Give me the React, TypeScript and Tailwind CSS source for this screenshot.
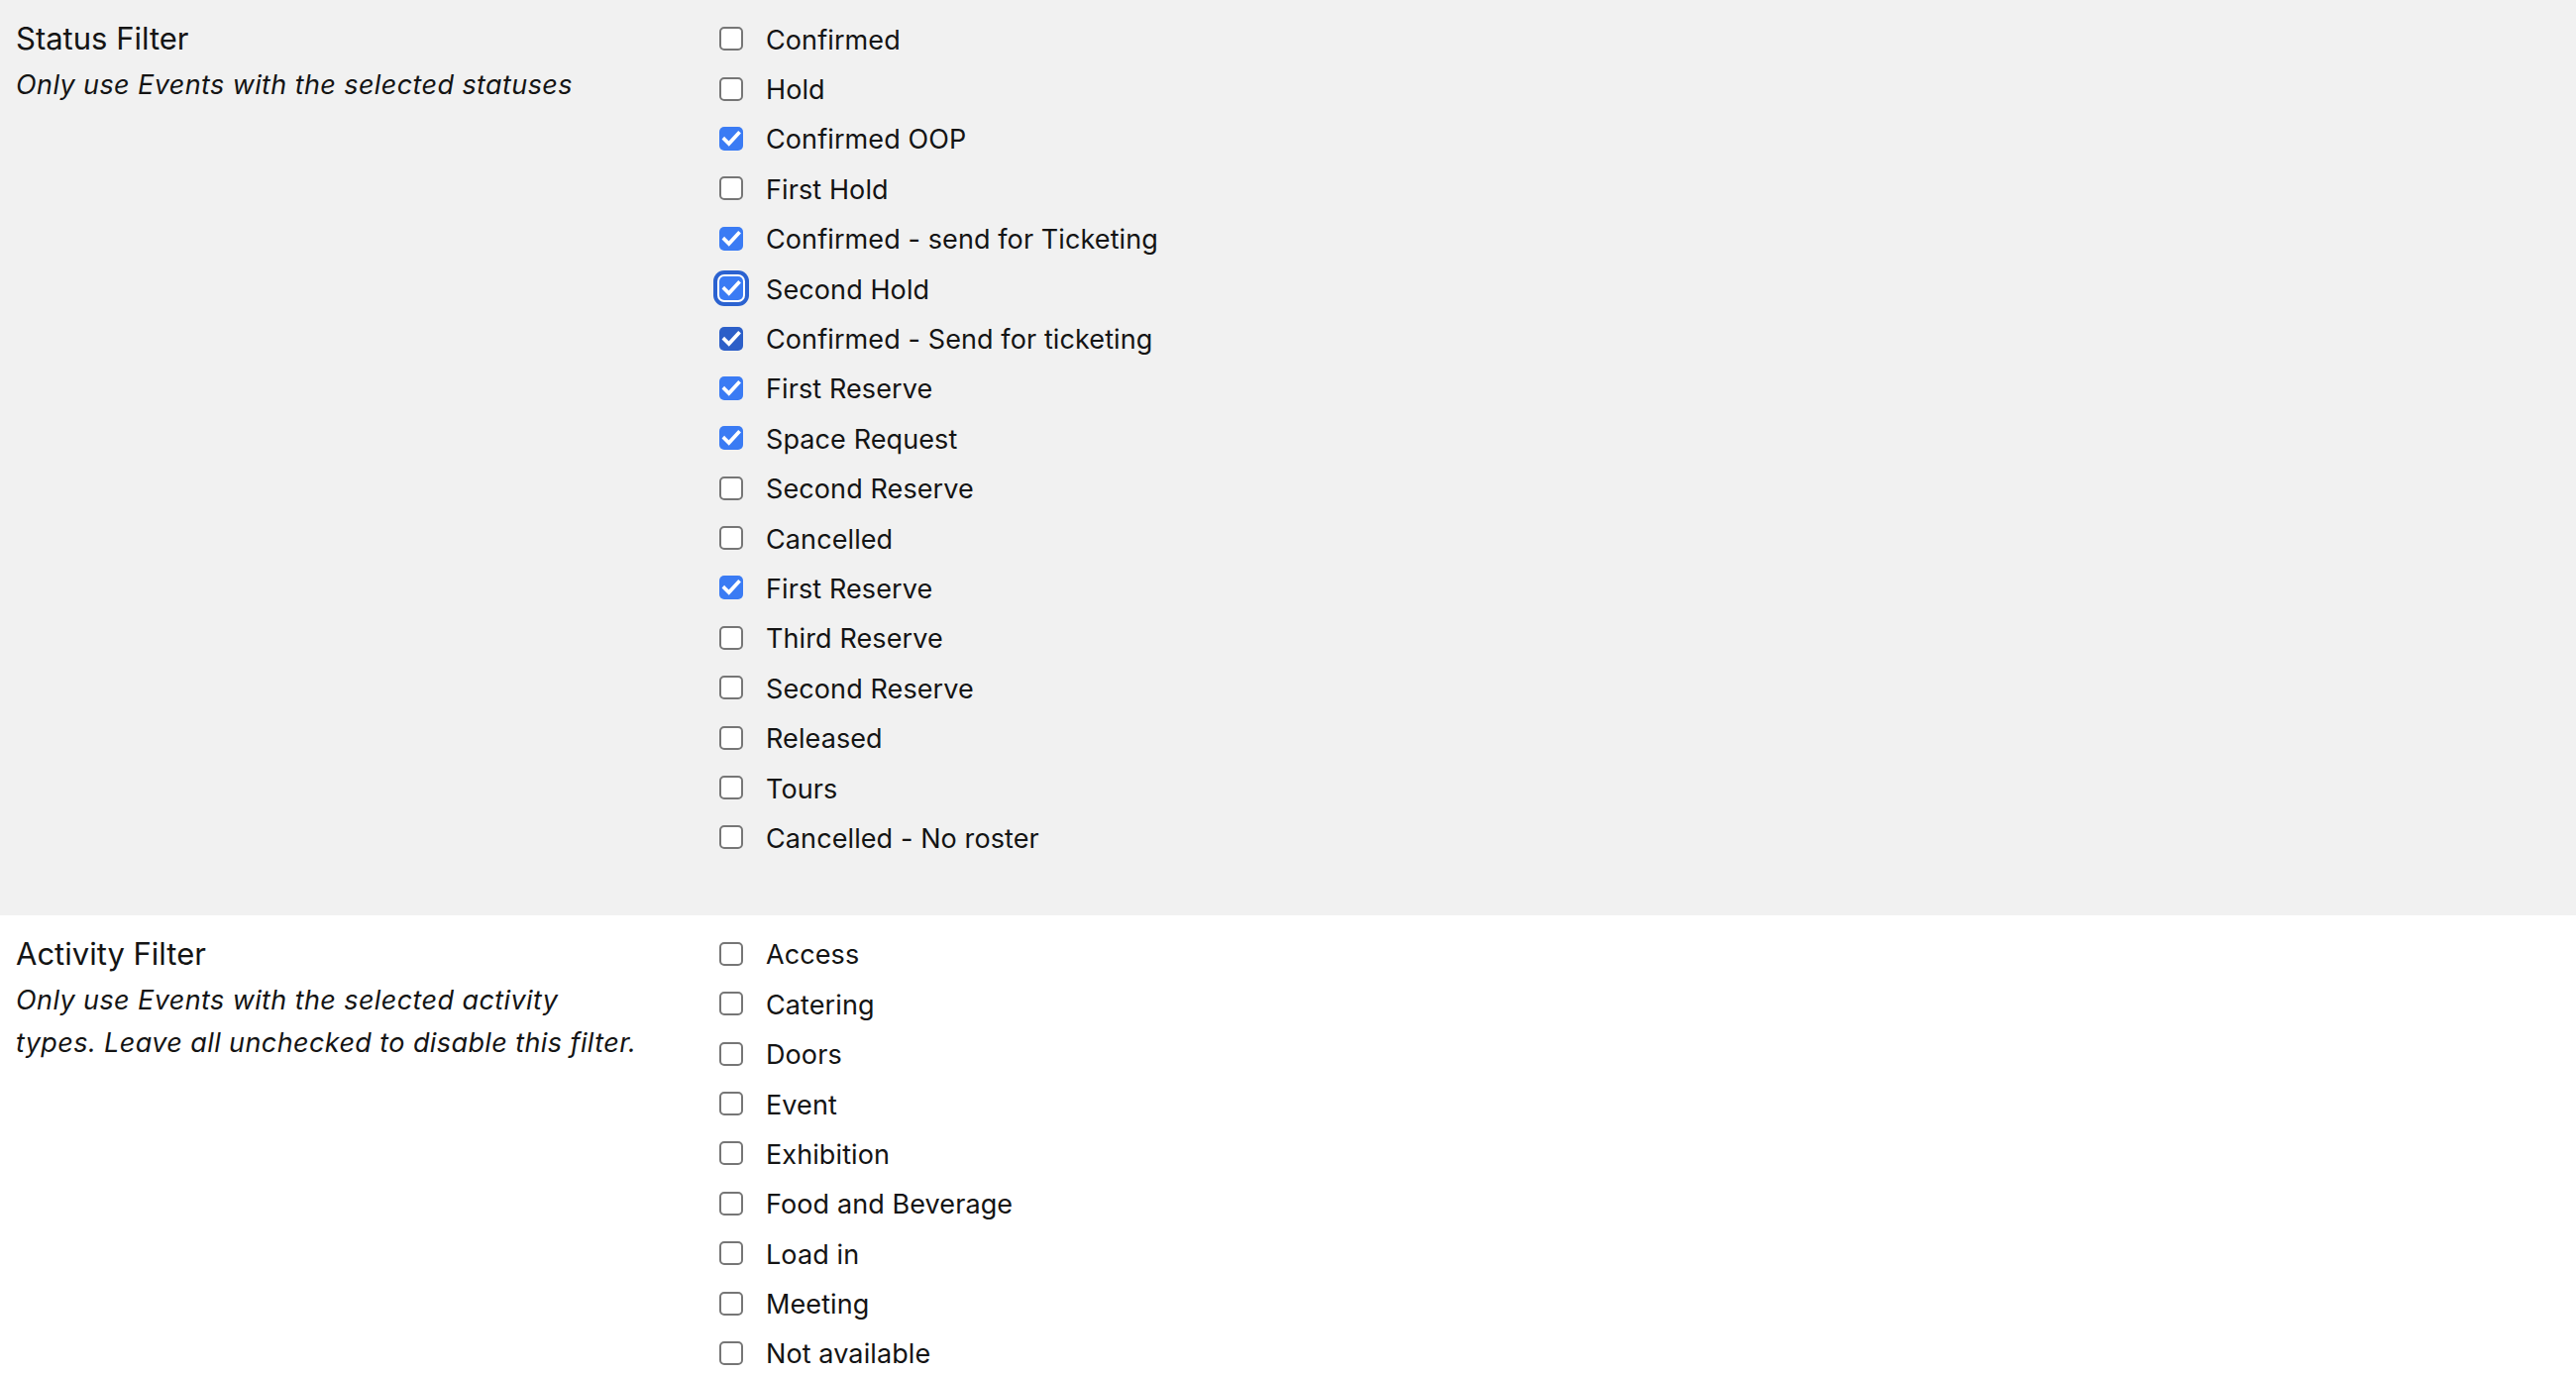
import React from 'react'

type Item = { label: string; checked?: boolean; focused?: boolean; dark?: boolean }

const statuses: Item[] = [
  { label: 'Confirmed' },
  { label: 'Hold' },
  { label: 'Confirmed OOP', checked: true },
  { label: 'First Hold' },
  { label: 'Confirmed - send for Ticketing', checked: true },
  { label: 'Second Hold', checked: true, focused: true },
  { label: 'Confirmed - Send for ticketing', checked: true, dark: true },
  { label: 'First Reserve', checked: true },
  { label: 'Space Request', checked: true },
  { label: 'Second Reserve' },
  { label: 'Cancelled' },
  { label: 'First Reserve', checked: true },
  { label: 'Third Reserve' },
  { label: 'Second Reserve' },
  { label: 'Released' },
  { label: 'Tours' },
  { label: 'Cancelled - No roster' },
]

const activities: Item[] = [
  { label: 'Access' },
  { label: 'Catering' },
  { label: 'Doors' },
  { label: 'Event' },
  { label: 'Exhibition' },
  { label: 'Food and Beverage' },
  { label: 'Load in' },
  { label: 'Meeting' },
  { label: 'Not available' },
]

function Box({ item }: { item: Item }) {
  if (!item.checked) {
    return <span className="w-[24px] h-[24px] rounded-[5px] border-[2.5px] border-[#767676] bg-white shrink-0" />
  }
  return (
    <span
      className={
        'w-[24px] h-[24px] rounded-[5px] shrink-0 flex items-center justify-center ' +
        (item.dark ? 'bg-[#2c5fc8]' : 'bg-[#3a7bf4]') +
        (item.focused ? ' ring-[4px] ring-[#2b62d0] ring-offset-[2px] ring-offset-white' : '')
      }
    >
      <svg viewBox="0 0 24 24" className="w-[22px] h-[22px]" fill="none">
        <path d="M4.5 12.5l5 5L20 6" stroke="white" strokeWidth="4" strokeLinecap="square" />
      </svg>
    </span>
  )
}

function Section({ title, desc, items, gray }: { title: string; desc: React.ReactNode; items: Item[]; gray?: boolean }) {
  return (
    <section className={'flex pt-[14px] pb-[53px] ' + (gray ? 'bg-[#f1f1f1]' : 'bg-white')}>
      <div className="w-[726px] shrink-0 pl-[16px]">
        <h2 className="text-[31px] leading-[50px] font-normal">{title}</h2>
        <p className="italic text-[27px] leading-[43px] tracking-[0.4px] max-w-[660px]">{desc}</p>
      </div>
      <ul className="flex flex-col">
        {items.map((it, i) => (
          <li key={i} className="h-[50.4px] flex items-center gap-[23px]">
            <Box item={it} />
            <span className="text-[27px] leading-none pt-[2px] tracking-[0.1px]">{it.label}</span>
          </li>
        ))}
      </ul>
    </section>
  )
}

export default function App() {
  return (
    <div className="min-h-screen bg-white text-[#141414] font-['Inter',sans-serif]">
      <Section
        gray
        title="Status Filter"
        desc="Only use Events with the selected statuses"
        items={statuses}
      />
      <Section
        title="Activity Filter"
        desc={
          <>
            Only use Events with the selected activity
            <br />
            types. Leave all unchecked to disable this filter.
          </>
        }
        items={activities}
      />
    </div>
  )
}
